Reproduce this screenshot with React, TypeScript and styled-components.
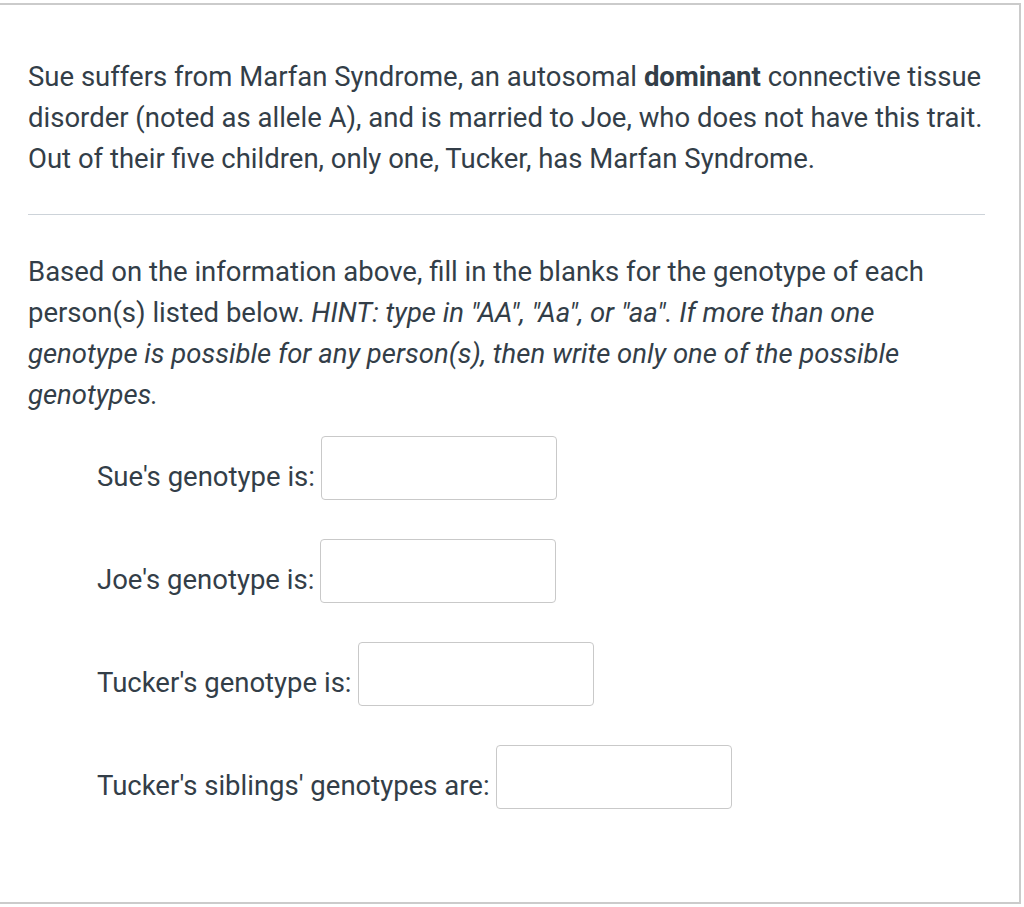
import React from 'react'
import styled, { createGlobalStyle } from 'styled-components'

const GlobalStyle = createGlobalStyle`
  html, body {
    margin: 0;
    padding: 0;
    background: #ffffff;
  }
  body {
    font-family: Roboto, "Liberation Sans", sans-serif;
    color: #333e48;
  }
`

const Frame = styled.div`
  box-sizing: border-box;
  margin-top: 3px;
  width: 1021px;
  height: 901px;
  border-top: 2px solid #cbcbcb;
  border-right: 2px solid #cbcbcb;
  border-bottom: 2px solid #cbcbcb;
  padding: 51px 34px 0 28px;
  background: #ffffff;
`

const Paragraph = styled.p`
  margin: 0;
  font-size: 27.5px;
  line-height: 41px;
`

const Divider = styled.hr`
  margin: 35px 0 36px;
  border: 0;
  border-top: 1px solid #cdd3d9;
`

const Answers = styled.div`
  display: flex;
  flex-direction: column;
  gap: 39px;
  margin-top: 21px;
  padding-left: 69px;
`

const Row = styled.label`
  display: flex;
  align-items: center;
  gap: 6px;
  font-size: 27.5px;
`

const Caption = styled.span`
  padding-top: 16px;
`

const Blank = styled.input`
  box-sizing: border-box;
  width: 236px;
  height: 64px;
  border: 1px solid #c9c9c9;
  border-radius: 4px;
  background: #fff;
  font-family: inherit;
  font-size: 27.5px;
  padding: 0 10px;
  outline: none;
`

const rows = [
  "Sue's genotype is:",
  "Joe's genotype is:",
  "Tucker's genotype is:",
  "Tucker's siblings' genotypes are:",
]

export default function App() {
  return (
    <>
      <GlobalStyle />
      <Frame>
        <Paragraph>
          Sue suffers from Marfan Syndrome, an autosomal <strong>dominant</strong> connective tissue
          disorder (noted as allele A), and is married to Joe, who does not have this trait.
          Out of their five children, only one, Tucker, has Marfan Syndrome.
        </Paragraph>
        <Divider />
        <Paragraph>
          Based on the information above, fill in the blanks for the genotype of each
          person(s) listed below.{' '}
          <em>
            HINT: type in "AA", "Aa", or "aa". If more than one genotype is possible for
            any person(s), then write only one of the possible genotypes.
          </em>
        </Paragraph>
        <Answers>
          {rows.map(label => (
            <Row key={label}>
              <Caption>{label}</Caption>
              <Blank type="text" />
            </Row>
          ))}
        </Answers>
      </Frame>
    </>
  )
}
